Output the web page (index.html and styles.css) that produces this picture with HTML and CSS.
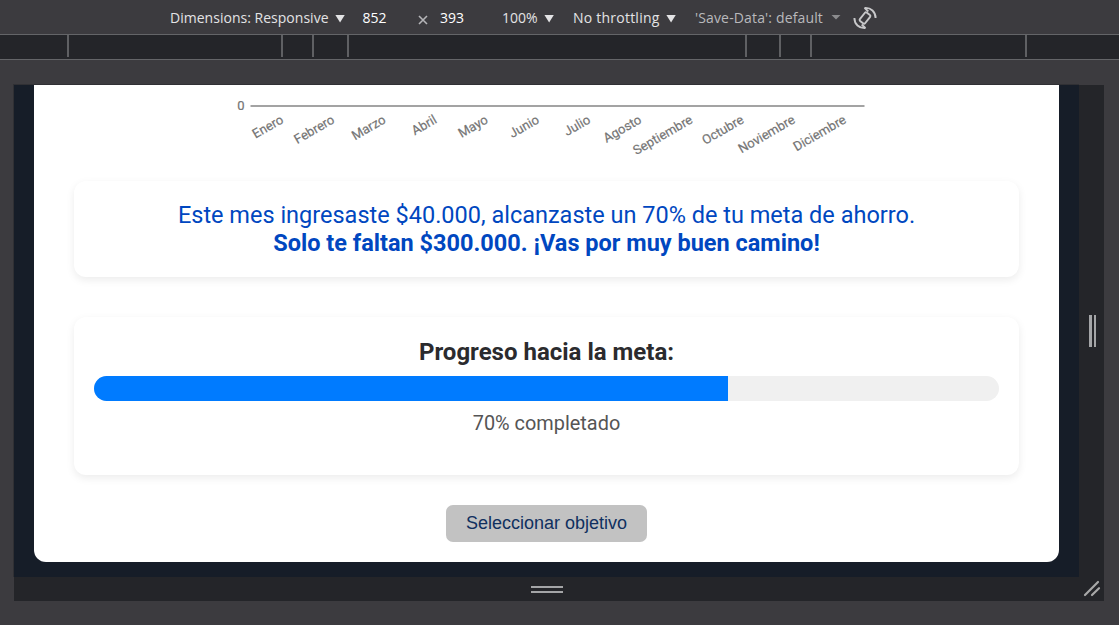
FILE: index.html
```html
<!DOCTYPE html>
<html lang="es">
<head>
<meta charset="utf-8">
<title>Meta de ahorro</title>
<link rel="stylesheet" href="styles.css">
</head>
<body>
<header class="toolbar">
  <span class="tool dimensions"><span class="label">Dimensions: Responsive</span><i class="arrow"></i></span>
  <span class="tool width">852</span>
  <svg class="times" viewBox="0 0 10 10"><path d="M1 1l8 8M9 1l-8 8"/></svg>
  <span class="tool height">393</span>
  <span class="tool zoom"><span class="label">100%</span><i class="arrow"></i></span>
  <span class="tool throttle"><span class="label">No throttling</span><i class="arrow"></i></span>
  <span class="tool savedata"><span class="label">'Save-Data': default</span><i class="arrow small"></i></span>
  <svg class="rotate" viewBox="0 0 24 24"><rect x="8.700" y="6.700" width="6.600" height="10.600" rx="1.200" transform="rotate(38 12 12)"/><path d="M11.500 1.900C18 1.300 22.600 6 22.600 12M11.500 1.900l3.800 3.600M12.500 22.100C6 22.700 1.400 18 1.400 12M12.500 22.100l-3.800-3.600"/></svg>
</header>
<div class="ruler"><i></i><i></i><i></i><i></i><i></i><i></i><i></i><i></i></div>
<div class="device">
  <div class="viewport">
    <main class="sheet">
      <svg class="chart" viewBox="0 0 1025 96">
        <path class="axis" d="M216.500 21H830.500"/>
        <text class="zero" x="210.500" y="25">0</text>
        <g class="months">
          <text transform="translate(250.300 37.200) rotate(-30)">Enero</text>
          <text transform="translate(301.500 37.200) rotate(-30)">Febrero</text>
          <text transform="translate(352.600 37.200) rotate(-30)">Marzo</text>
          <text transform="translate(403.800 37.200) rotate(-30)">Abril</text>
          <text transform="translate(455 37.200) rotate(-30)">Mayo</text>
          <text transform="translate(506.100 37.200) rotate(-30)">Junio</text>
          <text transform="translate(557.300 37.200) rotate(-30)">Julio</text>
          <text transform="translate(608.500 37.200) rotate(-30)">Agosto</text>
          <text transform="translate(659.600 37.200) rotate(-30)">Septiembre</text>
          <text transform="translate(710.800 37.200) rotate(-30)">Octubre</text>
          <text transform="translate(762 37.200) rotate(-30)">Noviembre</text>
          <text transform="translate(813.100 37.200) rotate(-30)">Diciembre</text>
        </g>
      </svg>
      <section class="card insight">
        <p>Este mes ingresaste $40.000, alcanzaste un 70% de tu meta de ahorro.</p>
        <p class="strong">Solo te faltan $300.000. ¡Vas por muy buen camino!</p>
      </section>
      <section class="card progress">
        <h2>Progreso hacia la meta:</h2>
        <div class="track"><div class="fill" style="width:70%"></div></div>
        <p class="done">70% completado</p>
      </section>
      <button class="goal">Seleccionar objetivo</button>
    </main>
  </div>
  <div class="handle side"><i></i><i></i></div>
  <div class="handle bottom"><i></i><i></i></div>
  <svg class="corner" viewBox="0 0 25 24"><path d="M6 18L19 5M13 18L20 11.200"/></svg>
</div>
</body>
</html>
```
FILE: styles.css
```css
* { box-sizing: border-box; }
body { margin: 0; height: 625px; overflow: hidden; background: #3c3b3f; font-family: Roboto, sans-serif; }
p, h2 { margin: 0; }

.toolbar {
  height: 35px; padding-left: 170px; border-bottom: 1px solid #646568;
  display: grid; grid-template-columns: 192.500px 55.500px 22px 62px 71px 122px 158px 24px;
  align-items: center; color: #e3e3e5;
  font: 14px/34px "Open Sans", "Noto Sans", sans-serif; white-space: nowrap;
}
.tool { display: flex; align-items: center; height: 34px; padding-top: 1px; }
.dimensions { letter-spacing: .02px; }
.throttle { letter-spacing: .23px; }
.width, .height { color: #fff; }
.savedata { color: #b9b9bc; letter-spacing: .15px; }
.arrow { width: 10px; height: 8px; margin: 2px 0 0 6.500px; background: #e3e3e5; clip-path: polygon(0 0, 100% 0, 50% 100%); }
.arrow.small { height: 5px; margin: 0 0 1px 8px; background: #8b8b8e; }
.times { width: 10px; height: 10px; margin-top: 5px; fill: none; stroke: #b5b5b8; stroke-width: 1.600; }
.rotate { width: 24px; height: 24px; margin-top: 1px; fill: none; stroke: #c8c8ca; stroke-width: 1.900; }

.ruler {
  height: 25px; background: #242529; border-bottom: 1px solid #646568;
  display: grid; grid-template-columns: 69px 214px 31px 35px 398px 34px 31px 215px;
}
.ruler i { height: 22px; border-right: 2px solid #5f6063; }

.device {
  width: 1090px; height: 516px; margin: 25px 0 0 14px; background: #242529;
  display: grid; grid-template: 492px 24px / 1065px 25px;
}
.viewport { padding: 0 20px 15px; background: #161d28; box-shadow: 0 0 0 1px #303034; clip-path: inset(-1px 0 0 -1px); }
.sheet {
  height: 477px; background: #fff; border-radius: 0 0 12px 12px; padding: 0 40px;
  display: flex; flex-direction: column; align-items: center;
}
.chart { width: 1025px; height: 96px; flex: none; font-family: Roboto, sans-serif; font-size: 13px; fill: #757575; }
.axis { stroke: #858585; stroke-width: 1.600; }
.chart text { text-anchor: end; stroke: #757575; stroke-width: .2; }
.card { width: 945px; border-radius: 12px; background: #fff; box-shadow: 0 3px 8px rgba(0, 0, 0, .08); text-align: center; }
.insight { height: 96px; padding-top: 20px; font-size: 23.500px; line-height: 28px; color: #0047c0; }
.strong { font-weight: 700; }
.progress { height: 158px; margin-top: 40px; padding: 21px 20px 20px; }
.progress h2 { font-size: 24px; line-height: 29px; color: #2b2b2e; }
.track { height: 25px; margin-top: 9px; background: #f0f0f0; border-radius: 13px; overflow: hidden; }
.fill { height: 100%; background: #007bff; }
.done { margin-top: 11px; font-size: 19.900px; line-height: 24px; color: #555; }
.goal {
  width: 201px; height: 37px; margin-top: 30px; padding: 0; border: 0; border-radius: 7px;
  background: #c2c2c2; color: #10305f; font: 18px/35px "Liberation Sans", Arial, sans-serif;
}

.handle { display: flex; align-items: center; justify-content: center; gap: 2px; }
.handle i { background: #a4a5a7; }
.side { padding-left: 1px; gap: 2px; }
.side i { width: 3px; height: 32px; }
.side i:last-child { width: 2px; }
.bottom { flex-direction: column; gap: 3px; padding: 1px 0 0 1px; }
.bottom i { width: 32px; height: 2px; }
.corner { width: 25px; height: 24px; fill: none; stroke: #a8a8a8; stroke-width: 2.200; stroke-linecap: round; }
```
